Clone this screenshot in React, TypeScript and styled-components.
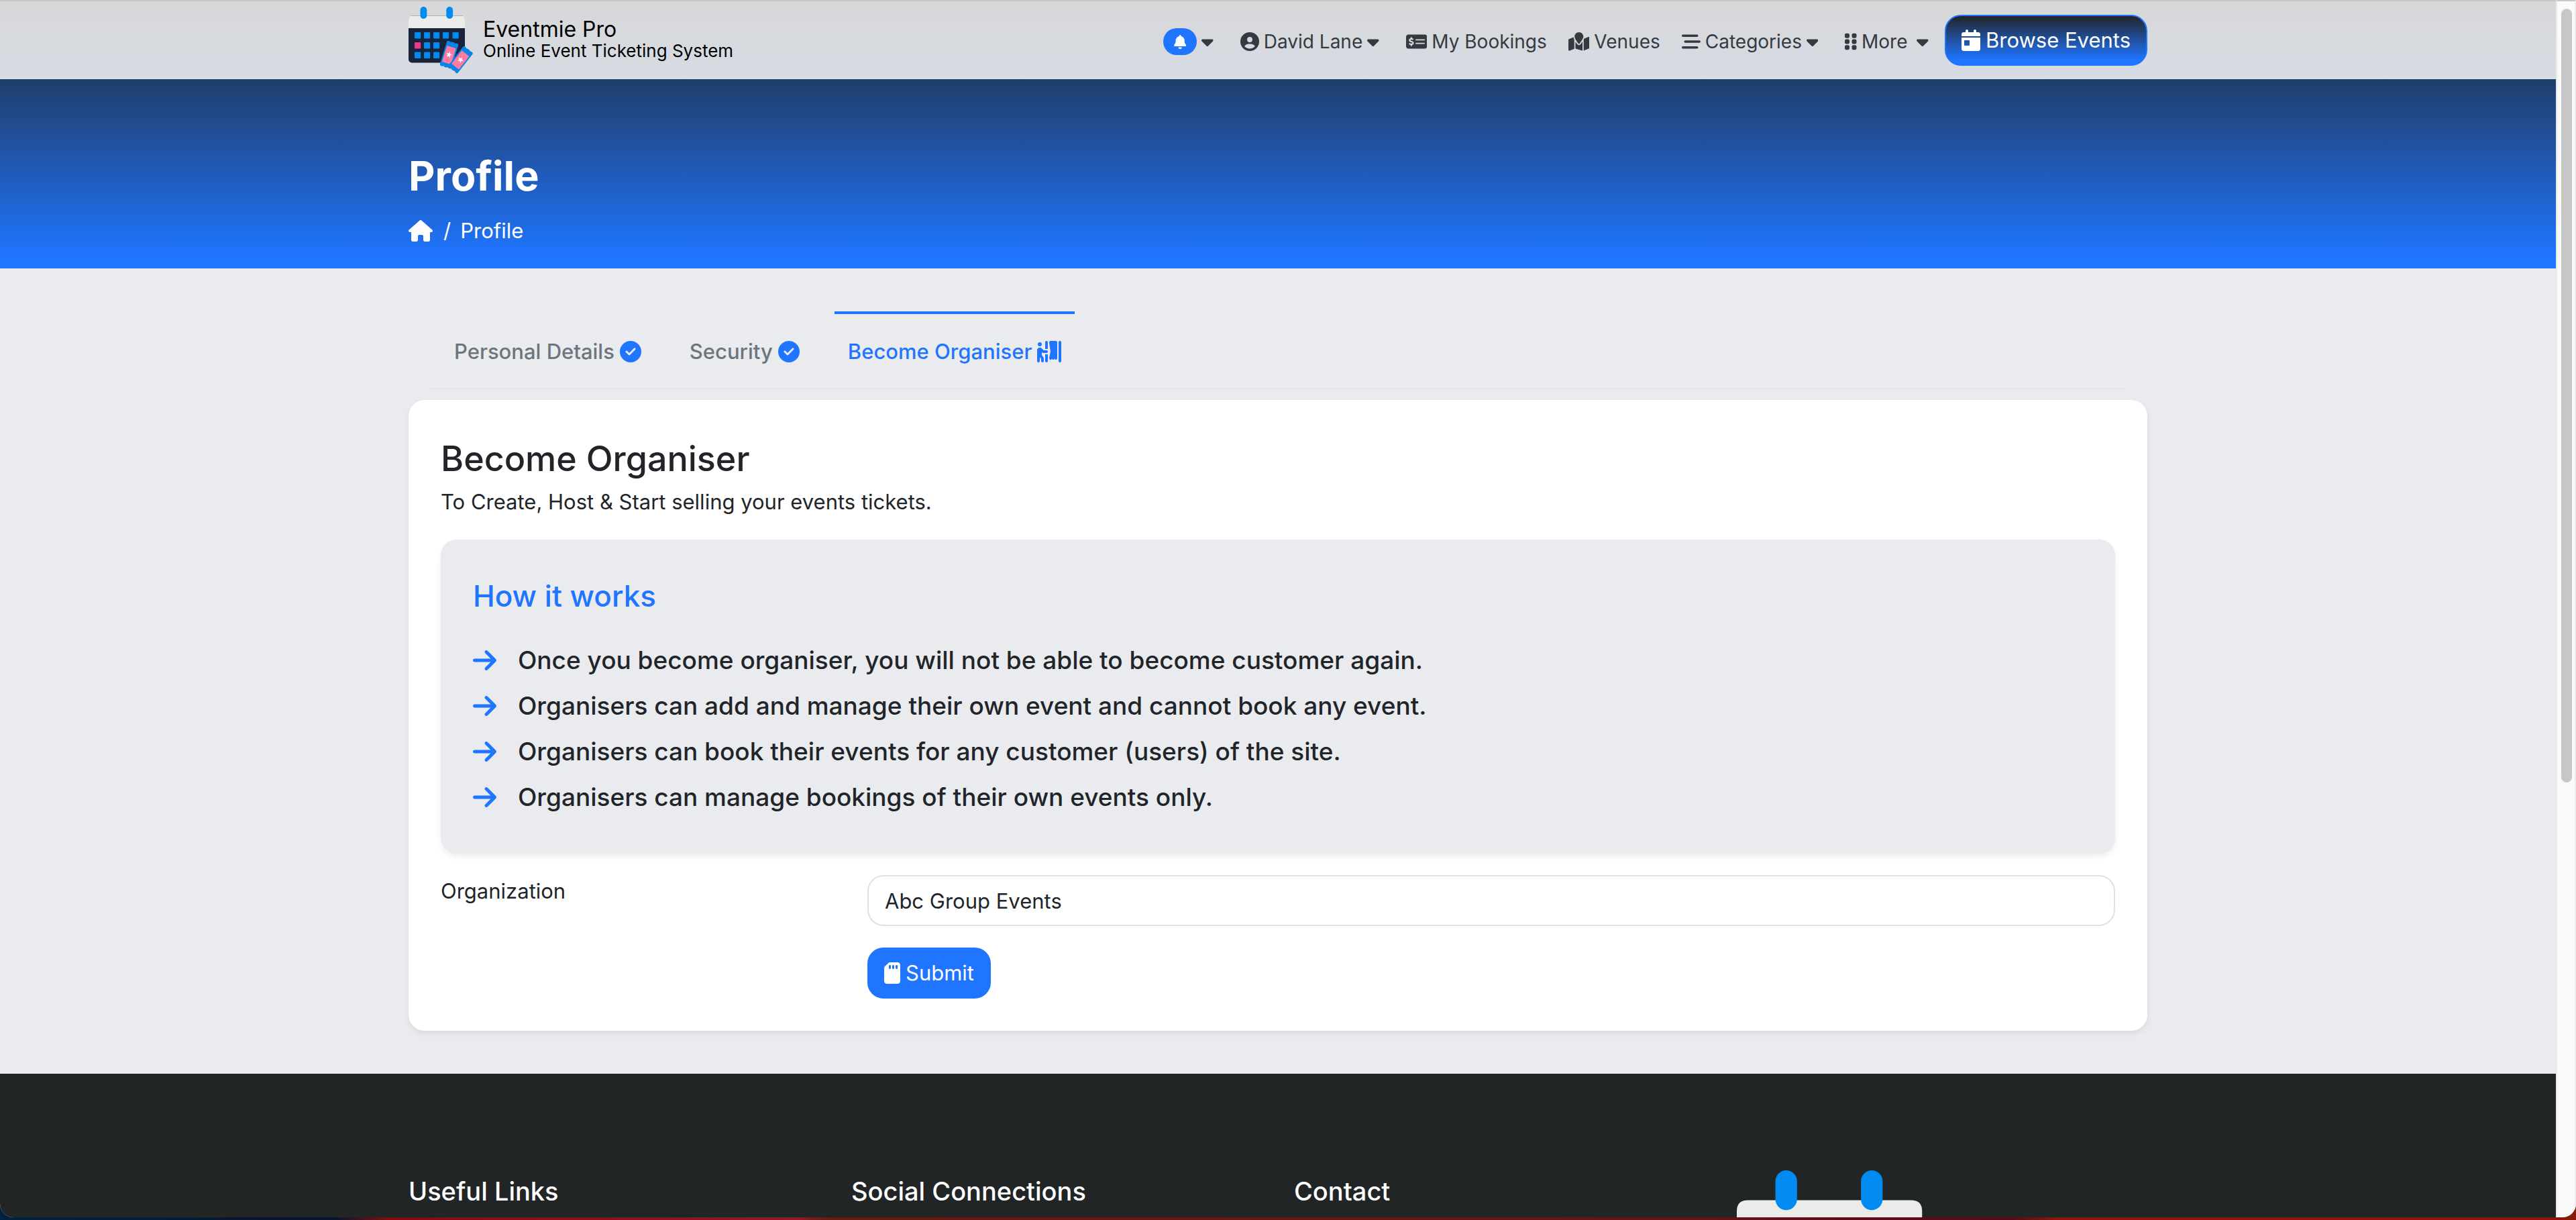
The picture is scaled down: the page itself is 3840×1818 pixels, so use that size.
import React from "react";
import styled, { createGlobalStyle, css } from "styled-components";
import {
  FaArrowRight,
  FaBarsStaggered,
  FaBell,
  FaCalendarDay,
  FaCaretDown,
  FaCircleCheck,
  FaCircleUser,
  FaGripVertical,
  FaHouse,
  FaMapLocation,
  FaMoneyCheckDollar,
  FaPersonBooth,
  FaSdCard,
} from "react-icons/fa6";

const color = {
  primary: "#1f75ff",
  ink: "#212529",
  nav: "#343a40",
  muted: "#6c757d",
  page: "#e9ebee",
  line: "#dee2e6",
  footer: "#212525",
};

const GlobalStyle = createGlobalStyle`
  *, *::before, *::after { box-sizing: border-box; }
  body {
    margin: 0;
    font-family: Inter, "Noto Sans", sans-serif;
    font-size: 31px;
    line-height: 48px;
    color: ${color.ink};
  }
  h1, h2, h3, p, ul, ol { margin: 0; padding: 0; }
  ul, ol { list-style: none; }
  a { color: inherit; text-decoration: none; }
  button, input { font: inherit; }
  svg { display: block; flex: none; }

  /* icons keep the natural width of their glyph at a height of 1em */
  svg[viewBox="0 0 320 512"] { width: 0.625em; }
  svg[viewBox="0 0 384 512"] { width: 0.75em; }
  svg[viewBox="0 0 448 512"] { width: 0.875em; }
  svg[viewBox="0 0 576 512"] { width: 1.125em; }
`;

/* ---------- window ---------- */

const Desktop = styled.div`
  height: 100vh;
  padding-bottom: 4px;
  background: linear-gradient(
    90deg,
    #04203f 0,
    #06162c 13%,
    #7a0f10 15%,
    #8c1a2c 31%,
    #6a1a10 32%,
    #6a1018 66%,
    #560916 78%,
    #8a1a08 80%,
    #8a1a08 100%
  );
`;

const BrowserWindow = styled.div`
  display: flex;
  height: 100%;
  overflow: hidden;
  border-radius: 0 0 20px 20px;
  background: ${color.footer};
`;

const Page = styled.div`
  flex: 1;
  min-width: 0;
  overflow: hidden;
  background: ${color.page};
`;

const ScrollTrack = styled.div`
  width: 30px;
  padding: 11px 4px 0 6px;
  border-left: 2px solid #e9e9e9;
  border-right: 2px solid #ededed;
  border-top: 2px solid #c9c9c9;
  background: #fafafa;
`;

const ScrollThumb = styled.div`
  width: 16px;
  height: 64%;
  border-radius: 8px;
  background: #c7c7c7;
`;

const Container = styled.div`
  width: 100%;
  max-width: 2640px;
  margin: 0 auto;
  padding: 0 24px;
`;

/* ---------- header ---------- */

const Masthead = styled.div`
  background: linear-gradient(${color.ink} 0%, ${color.primary} 96%);
`;

const Header = styled.header`
  border-top: 2px solid #c9c9cb;
  background: rgba(255, 255, 255, 0.82);
`;

const HeaderRow = styled(Container)`
  display: flex;
  align-items: center;
  justify-content: space-between;
  height: 116px;
`;

const Brand = styled.a`
  display: flex;
  align-items: center;
  gap: 14px;
  color: #000;
`;

const BrandText = styled.span`
  display: flex;
  flex-direction: column;
  font-size: 32px;
  line-height: 32px;
`;

const Tagline = styled.span`
  font-size: 26px;
`;

const NavList = styled.ul`
  display: flex;
  align-items: center;
  color: ${color.nav};
  font-size: 28px;
`;

const NavButton = styled.button<{ $gap?: number }>`
  display: flex;
  align-items: center;
  gap: ${({ $gap = 7 }) => $gap}px;
  margin: 0 8px 0 0;
  padding: 4px 16px 0;
  border: 0;
  background: none;
  color: inherit;
`;

const NavLink = styled.a`
  display: flex;
  align-items: center;
  gap: 7px;
  padding: 4px 16px 0;
`;

const NavLabel = styled.span`
  display: flex;
  align-items: center;
  gap: 7px;
`;

const BellBadge = styled.span`
  display: flex;
  align-items: center;
  justify-content: center;
  width: 50px;
  height: 40px;
  border-radius: 20px;
  background: ${color.primary};
  color: #fff;
  font-size: 21px;
`;

const buttonBase = css`
  display: inline-flex;
  align-items: center;
  gap: 8px;
  height: 76px;
  padding: 0 23px;
  border: 2px solid ${color.primary};
  border-radius: 24px;
  color: #fff;
`;

const BrowseLink = styled.a`
  ${buttonBase}
  background: linear-gradient(${color.ink}, ${color.primary} 90%);
  font-size: 31px;
`;

const BrowseIcon = styled(FaCalendarDay)`
  font-size: 32px;
`;

/* ---------- hero ---------- */

const Hero = styled(Container)`
  padding-top: 96px;
  padding-bottom: 32px;
  color: #fff;
`;

const HeroTitle = styled.h1`
  margin-bottom: 10px;
  font-size: 61px;
  font-weight: 700;
  line-height: 96px;
`;

const Crumbs = styled.ol`
  display: flex;
  gap: 16px;
`;

const Crumb = styled.li`
  display: flex;
  align-items: center;
  gap: 14px;

  svg { font-size: 32px; }
`;

/* ---------- tabs and card ---------- */

const Main = styled.main`
  padding: 64px 0;
`;

const Tabs = styled.div`
  display: flex;
  gap: 32px;
  margin: 0 32px 16px;
  padding: 0 16px;
  border-bottom: 2px solid #e3e5e9;
`;

const Tab = styled.button<{ $active?: boolean }>`
  display: flex;
  align-items: center;
  gap: 8px;
  padding: 32px 20px 30px;
  border: 0;
  border-top: 4px solid ${({ $active }) => ($active ? color.primary : "transparent")};
  background: none;
  color: ${({ $active }) => ($active ? color.primary : color.muted)};
  font-weight: 500;
  line-height: 48px;

  svg {
    color: ${color.primary};
    font-size: 32px;
  }
`;

const Card = styled.section`
  padding: 48px;
  border-radius: 24px;
  background: #fff;
  box-shadow: 0 4px 8px rgba(0, 0, 0, 0.075);
`;

const CardTitle = styled.h2`
  font-size: 52px;
  font-weight: 500;
  line-height: 80px;
`;

const InfoBox = styled.section`
  margin: 32px 0;
  padding: 48px 48px 54px;
  border-radius: 24px;
  background: ${color.page};
  box-shadow: 0 4px 8px rgba(0, 0, 0, 0.075);
`;

const InfoTitle = styled.h3`
  margin-bottom: 30px;
  color: ${color.primary};
  font-size: 44px;
  font-weight: 500;
  line-height: 72px;
`;

const Steps = styled.ul`
  display: grid;
  gap: 8px;
`;

const Step = styled.li`
  display: flex;
  align-items: center;
  gap: 32px;
  font-size: 37px;
  font-weight: 500;
  line-height: 60px;

  svg {
    color: ${color.primary};
    font-size: 40px;
  }
`;

const FormRow = styled.div`
  display: flex;
  margin: 0 -24px;
`;

const LabelCell = styled.div`
  width: 25%;
  padding: 0 24px;
`;

const FieldCell = styled.div`
  display: flex;
  flex-direction: column;
  align-items: flex-start;
  gap: 32px;
  width: 75%;
  padding: 0 24px;
`;

const TextInput = styled.input`
  width: 100%;
  height: 76px;
  padding: 0 24px;
  border: 2px solid ${color.line};
  border-radius: 24px;
  background: #fff;
  color: ${color.ink};
`;

const SubmitButton = styled.button`
  ${buttonBase}
  background: ${color.primary};

  svg { font-size: 32px; }
`;

/* ---------- footer ---------- */

const Footer = styled.footer`
  padding: 144px 0;
  background: ${color.footer};
  color: #fff;
`;

const FooterGrid = styled(Container)`
  display: grid;
  grid-template-columns: repeat(4, 1fr);
  gap: 48px;
`;

const FooterTitle = styled.h3`
  padding-top: 7px;
  font-size: 38px;
  font-weight: 500;
`;

const CELLS: [number, number, string][] = [
  [9, 38, "#018bf0"], [23, 38, "#018bf0"], [37, 38, "#018bf0"], [51, 38, "#018bf0"], [65.5, 38, "#018bf0"],
  [9, 53, "#ea3a8c"], [23, 53, "#018bf0"], [37, 53, "#018bf0"],
  [9, 67.5, "#018bf0"], [23, 67.5, "#018bf0"], [37, 67.5, "#018bf0"],
];

function Ticket({ transform }: { transform: string }) {
  return (
    <g transform={transform}>
      <path
        d="M-9-17.5q0-2 2-2h2a2 2 0 0 0 3 0h4a2 2 0 0 0 3 0h2q2 0 2 2V17.5q0 2-2 2h-2a2 2 0 0 0-3 0h-4a2 2 0 0 0-3 0h-2q-2 0-2-2z"
        fill="#0a84e6"
      />
      <rect x="-7" y="-12" width="14" height="25" rx="1" fill="#fb7ba2" />
      <path
        d="M0-4.6 1.2-1.4 4.5-1.3 1.9.8 2.8 4 0 2.1-2.8 4-1.9.8-4.5-1.3-1.2-1.4z"
        fill="#fff"
      />
    </g>
  );
}

function Logo({ width }: { width: number }) {
  return (
    <svg width={width} viewBox="0 0 97 100" role="img" aria-label="Eventmie Pro">
      <rect y="13.5" width="84" height="70" rx="5" fill="#19233a" />
      <path d="M0 32V18.5q0-5 5-5H79q5 0 5 5V32z" fill="#ebebea" />
      <rect x="17.5" width="9.8" height="18" rx="4.9" fill="#018bf0" />
      <rect x="56.3" width="9.8" height="18" rx="4.9" fill="#018bf0" />
      {CELLS.map(([x, y, fill]) => (
        <rect key={`${x}-${y}`} x={x} y={y} width="9.2" height="9.5" rx="1" fill={fill} />
      ))}
      <Ticket transform="translate(60.5 71.5) rotate(17)" />
      <Ticket transform="translate(77.5 79) rotate(38)" />
    </svg>
  );
}

const STEPS = [
  "Once you become organiser, you will not be able to become customer again.",
  "Organisers can add and manage their own event and cannot book any event.",
  "Organisers can book their events for any customer (users) of the site.",
  "Organisers can manage bookings of their own events only.",
];

export default function App() {
  return (
    <Desktop>
      <GlobalStyle />
      <BrowserWindow>
        <Page>
          <Masthead>
            <Header>
              <HeaderRow>
                <Brand href="#">
                  <Logo width={97} />
                  <BrandText>
                    <span>Eventmie Pro</span>
                    <Tagline>Online Event Ticketing System</Tagline>
                  </BrandText>
                </Brand>
                <nav>
                  <NavList>
                    <li>
                      <NavButton aria-label="Notifications">
                        <BellBadge><FaBell /></BellBadge>
                        <FaCaretDown />
                      </NavButton>
                    </li>
                    <li>
                      <NavButton>
                        <NavLabel><FaCircleUser />David Lane</NavLabel>
                        <FaCaretDown />
                      </NavButton>
                    </li>
                    <li><NavLink href="#"><FaMoneyCheckDollar />My Bookings</NavLink></li>
                    <li><NavLink href="#"><FaMapLocation />Venues</NavLink></li>
                    <li>
                      <NavButton>
                        <NavLabel><FaBarsStaggered />Categories</NavLabel>
                        <FaCaretDown />
                      </NavButton>
                    </li>
                    <li>
                      <NavButton $gap={14}>
                        <NavLabel><FaGripVertical />More</NavLabel>
                        <FaCaretDown />
                      </NavButton>
                    </li>
                    <li><BrowseLink href="#"><BrowseIcon />Browse Events</BrowseLink></li>
                  </NavList>
                </nav>
              </HeaderRow>
            </Header>
            <Hero>
              <HeroTitle>Profile</HeroTitle>
              <Crumbs>
                <Crumb><a href="#" aria-label="Home"><FaHouse /></a></Crumb>
                <Crumb><span>/</span>Profile</Crumb>
              </Crumbs>
            </Hero>
          </Masthead>

          <Main>
            <Container>
              <Tabs role="tablist">
                <Tab role="tab">Personal Details<FaCircleCheck /></Tab>
                <Tab role="tab">Security<FaCircleCheck /></Tab>
                <Tab role="tab" aria-selected $active>Become Organiser<FaPersonBooth /></Tab>
              </Tabs>
              <Card>
                <CardTitle>Become Organiser</CardTitle>
                <p>To Create, Host &amp; Start selling your events tickets.</p>
                <InfoBox>
                  <InfoTitle>How it works</InfoTitle>
                  <Steps>
                    {STEPS.map((step) => (
                      <Step key={step}><FaArrowRight />{step}</Step>
                    ))}
                  </Steps>
                </InfoBox>
                <form onSubmit={(e) => e.preventDefault()}>
                  <FormRow>
                    <LabelCell><label htmlFor="organization">Organization</label></LabelCell>
                    <FieldCell>
                      <TextInput id="organization" type="text" defaultValue="Abc Group Events" />
                      <SubmitButton type="submit"><FaSdCard />Submit</SubmitButton>
                    </FieldCell>
                  </FormRow>
                </form>
              </Card>
            </Container>
          </Main>

          <Footer>
            <FooterGrid>
              <FooterTitle>Useful Links</FooterTitle>
              <FooterTitle>Social Connections</FooterTitle>
              <FooterTitle>Contact</FooterTitle>
              <Logo width={319} />
            </FooterGrid>
          </Footer>
        </Page>
        <ScrollTrack><ScrollThumb /></ScrollTrack>
      </BrowserWindow>
    </Desktop>
  );
}
